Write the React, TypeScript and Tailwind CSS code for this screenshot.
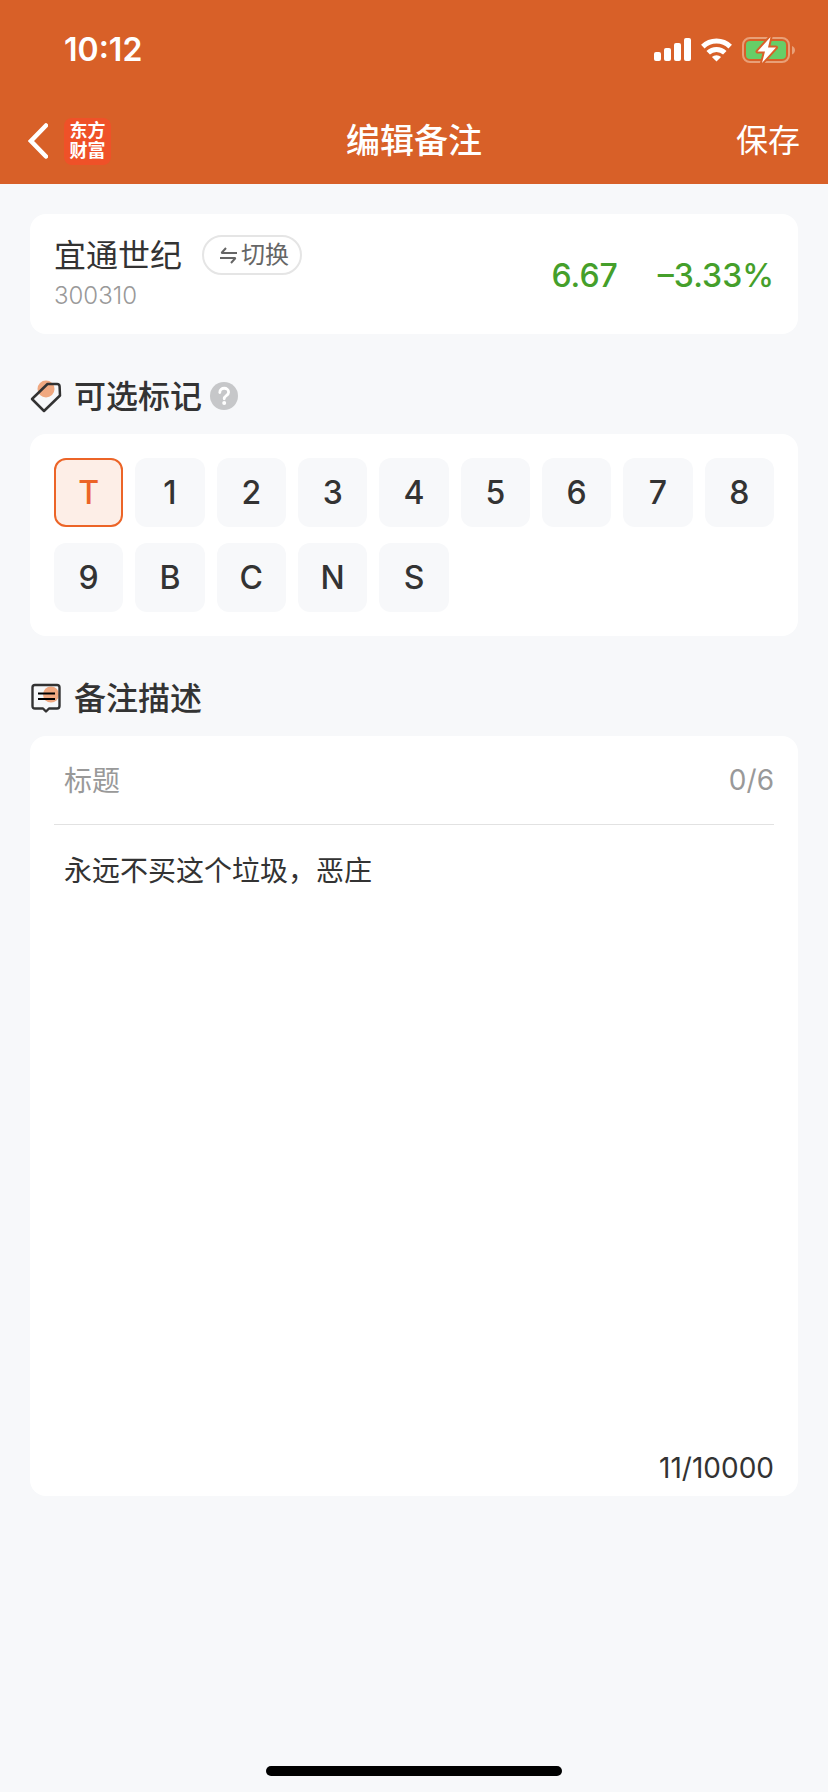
import React, { useState } from "react";

const tags = ["T", "1", "2", "3", "4", "5", "6", "7", "8", "9", "B", "C", "N", "S"];

const NOTE_LIMIT = 10000;
const TITLE_LIMIT = 6;

const StatusBar: React.FC = () => {
  return (
    <div className="flex h-24 items-center justify-between pt-1 pr-[33px] pl-16">
      <span className="text-[32px] leading-10 font-semibold">10:12</span>

      <div className="flex items-center gap-[10px]">
        {/* Signal */}
        <svg width="37" height="24" viewBox="0 0 37 24" fill="currentColor">
          <rect x="0" y="14" width="7" height="9" rx="2" />
          <rect x="10" y="10" width="7" height="13" rx="2" />
          <rect x="20" y="5" width="7" height="18" rx="2" />
          <rect x="30" y="0" width="7" height="23" rx="2" />
        </svg>

        {/* Wifi */}
        <svg width="31" height="24" viewBox="0 0 31 24" fill="none" stroke="currentColor" strokeWidth="5">
          <path d="M1.8 8.6a19.6 19.6 0 0 1 27.4 0" />
          <path d="M7.2 14.8a12 12 0 0 1 16.6 0" />
          <path d="M15.5 23.6l-4.6-4.6a6.6 6.6 0 0 1 9.2 0z" fill="currentColor" stroke="none" />
        </svg>

        {/* Battery */}
        <svg width="53" height="26" viewBox="0 0 53 26" fill="none">
          <rect x="1" y="1" width="46" height="24" rx="7" stroke="#e8a078" strokeWidth="2" />
          <path d="M50 9c4 1.500 4 7 0 8.500z" fill="#e8a078" />
          <rect x="4" y="4" width="40" height="18" rx="4" fill="#67ce67" />
          <path
            d="M28.500 0L15.500 14.500h7.500L20 26l14-15.500h-8z"
            fill="#fff"
            stroke="#d86028"
            strokeWidth="4"
            strokeLinejoin="round"
            paintOrder="stroke"
          />
        </svg>
      </div>
    </div>
  );
};

const NavBar: React.FC = () => {
  return (
    <div className="grid h-[88px] grid-cols-[1fr_auto_1fr] items-center px-7 pt-0.5">
      <div className="flex items-center gap-4">
        <button type="button" aria-label="返回">
          <svg width="20" height="36" viewBox="0 0 20 36" fill="none" stroke="currentColor" strokeWidth="4.500">
            <path d="M18 2.500L3 18l15 15.500" strokeLinecap="round" strokeLinejoin="miter" />
          </svg>
        </button>

        {/* App logo */}
        <div className="flex size-[47px] flex-col items-center justify-center rounded-lg bg-[#ef5128] text-[18px] leading-5 font-bold">
          <span>东方</span>
          <span>财富</span>
        </div>
      </div>

      <h1 className="text-[34px] leading-10 font-medium">编辑备注</h1>

      <button type="button" className="justify-self-end text-[32px] leading-10">
        保存
      </button>
    </div>
  );
};

const StockCard: React.FC = () => {
  return (
    <section className="flex items-center justify-between rounded-2xl bg-white px-6 py-5">
      <div>
        <div className="flex items-center gap-5">
          <h2 className="pt-0.5 text-[32px] leading-10">宜通世纪</h2>
          <button
            type="button"
            className="flex h-10 items-center gap-1 rounded-full border-2 border-[#e5e5e5] pr-[11px] pl-4 text-2xl leading-8 text-[#666]"
          >
            <svg width="17" height="17" viewBox="0 0 17 17" fill="none" stroke="currentColor" strokeWidth="2">
              <path d="M17 6H1.500L6 1" strokeLinejoin="bevel" />
              <path d="M0 11h15.500L11 16" strokeLinejoin="bevel" />
            </svg>
            切换
          </button>
        </div>
        <p className="pt-0.5 text-2xl leading-9 font-light text-[#999]">300310</p>
      </div>

      <div className="flex gap-10 pt-1 text-[32px] leading-10 font-medium text-[#459f2b]">
        <span>6.67</span>
        <span>–3.33%</span>
      </div>
    </section>
  );
};

interface ISectionTitle {
  icon: React.ReactNode;
  title: string;
  children?: React.ReactNode;
}

const SectionTitle: React.FC<ISectionTitle> = ({ icon, title, children }) => {
  return (
    <div className="flex h-[100px] items-center pt-6">
      {icon}
      <h2 className="ml-3 pt-0.5 text-[32px] leading-10 font-medium">{title}</h2>
      {children}
    </div>
  );
};

const TagIcon: React.FC = () => (
  <svg width="32" height="34" viewBox="0 0 32 34" fill="none">
    <circle cx="16" cy="10" r="8.500" fill="#f0a880" />
    <path d="M17.500 5h9.500q2.500 0 2.600 2.500l.4 9L14 32 2 20z" stroke="#333" strokeWidth="2.500" strokeLinejoin="round" />
  </svg>
);

const NoteIcon: React.FC = () => (
  <svg width="32" height="32" viewBox="0 0 32 32" fill="none">
    <circle cx="21" cy="12.500" r="8" fill="#f0a880" />
    <path
      d="M5 3h22q2.500 0 2.500 2.500V24q0 2.500-2.500 2.500h-8L16 29.500l-3-3H5q-2.500 0-2.500-2.500V5.500Q2.500 3 5 3z"
      stroke="#333"
      strokeWidth="2.400"
      strokeLinejoin="round"
    />
    <path d="M8 11.500h17M8 17h17" stroke="#000" strokeWidth="2.200" />
  </svg>
);

const App: React.FC = () => {
  const [selected, setSelected] = useState("T");
  const [title, setTitle] = useState("");
  const [note, setNote] = useState("永远不买这个垃圾，恶庄");

  return (
    <div
      lang="zh-CN"
      className="flex min-h-screen flex-col bg-[#f7f8fa] font-[Inter,'Noto_Sans_CJK_SC',sans-serif] text-[#333]"
    >
      <header className="bg-[#d86028] text-white">
        <StatusBar />
        <NavBar />
      </header>

      <main className="flex-1 px-[30px] pt-[30px]">
        <StockCard />

        <SectionTitle icon={<TagIcon />} title="可选标记">
          <button type="button" aria-label="帮助" className="ml-2">
            <svg width="28" height="28" viewBox="0 0 28 28" fill="none">
              <circle cx="14" cy="14" r="14" fill="#c6c7c9" />
              <path
                d="M9.800 10.500c0-5.600 8.800-5.600 8.800-.3 0 3.500-4.400 3.300-4.400 6.600"
                stroke="#fff"
                strokeWidth="2.800"
                strokeLinecap="round"
              />
              <circle cx="14.200" cy="21" r="2" fill="#fff" />
            </svg>
          </button>
        </SectionTitle>

        {/* Tags */}
        <section className="grid grid-cols-9 gap-x-3 gap-y-4 rounded-2xl bg-white p-6">
          {tags.map((tag) => (
            <button
              key={tag}
              type="button"
              aria-pressed={tag === selected}
              onClick={() => setSelected(tag)}
              className={`h-[69px] rounded-xl text-[32px] leading-10 font-medium ${
                tag === selected
                  ? "border-2 border-[#ec6427] bg-[#fdeee7] text-[#ec6427]"
                  : "bg-[#f7f8fa]"
              }`}
            >
              {tag}
            </button>
          ))}
        </section>

        <SectionTitle icon={<NoteIcon />} title="备注描述" />

        {/* Note form */}
        <section className="rounded-2xl bg-white px-6 pb-2 text-[28px] leading-10">
          <div className="flex h-[89px] items-center border-b border-[#e2e2e2] pl-[10px]">
            <input
              type="text"
              aria-label="标题"
              placeholder="标题"
              maxLength={TITLE_LIMIT}
              value={title}
              onChange={(e) => setTitle(e.target.value)}
              className="min-w-0 flex-1 pt-0.5 outline-none placeholder:text-[#999]"
            />
            <span className="text-[#999]">
              {title.length}/{TITLE_LIMIT}
            </span>
          </div>

          <textarea
            aria-label="备注描述"
            maxLength={NOTE_LIMIT}
            value={note}
            onChange={(e) => setNote(e.target.value)}
            className="block h-[623px] w-full resize-none pt-[26px] pl-[10px] outline-none"
          />

          <p className="text-right">
            {note.length}/{NOTE_LIMIT}
          </p>
        </section>
      </main>

      {/* Home indicator */}
      <div className="flex justify-center pt-6 pb-4">
        <div className="h-[10px] w-[296px] rounded-full bg-black" />
      </div>
    </div>
  );
};

export default App;
